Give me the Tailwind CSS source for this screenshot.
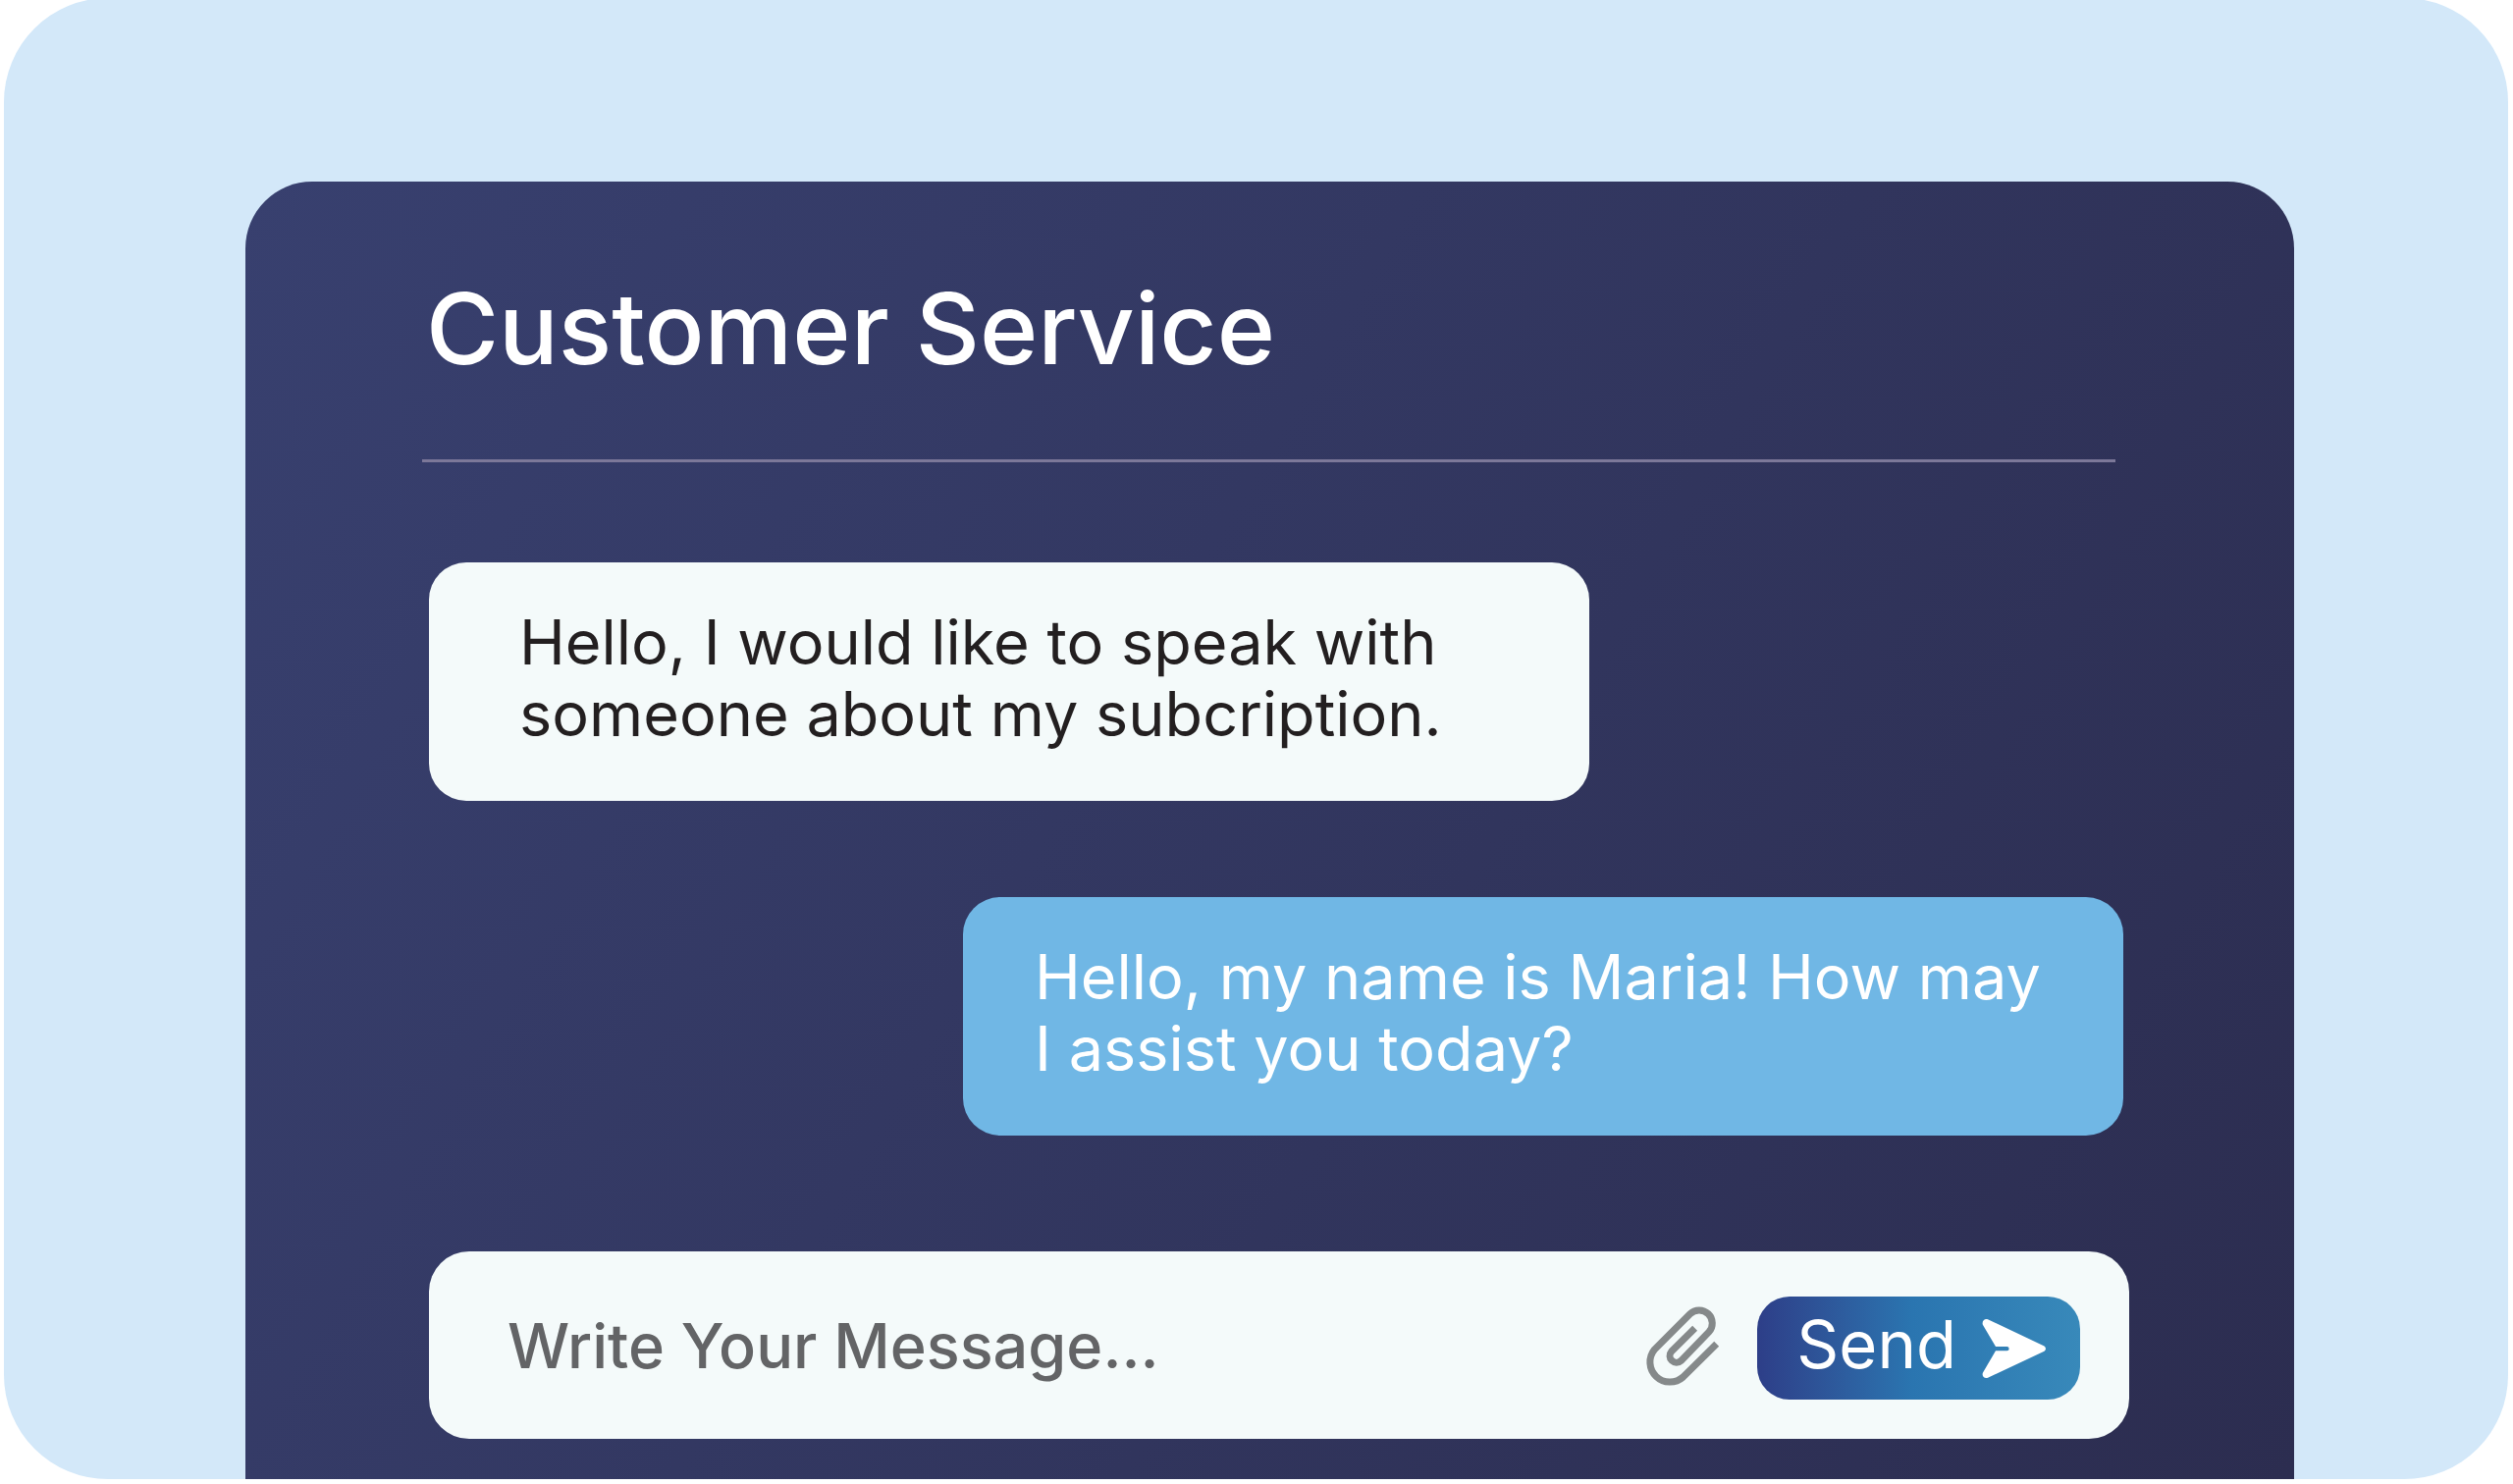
<!DOCTYPE html>
<html lang="en">
  <head>
    <meta charset="UTF-8" />
    <meta name="viewport" content="width=device-width, initial-scale=1.0" />
    <title>Customer Service</title>
    <script src="https://cdn.jsdelivr.net/npm/@tailwindcss/browser@4"></script>
  </head>
  <body class="bg-white font-['Inter',sans-serif]">
    <div class="-mt-0.5 mr-[5px] ml-1 rounded-[106px] bg-[#d3e8f9] pt-[187px] pr-[218px] pl-[246px]">
      <main
        class="rounded-t-[68px] bg-linear-[120deg] from-[#38406f] to-[#2c2d50] pt-[97px] pr-[168px] pb-[41px] pl-[180px]"
      >
        <h1 class="ml-1 text-[101px] leading-[104px] font-medium text-white">
          Customer Service
        </h1>
        <hr class="mt-[82px] mr-[14px] border-t-3 border-[#7c7899]" />

        <!-- Conversation -->
        <section class="mt-[102px] flex flex-col gap-[98px] pr-[6px] pl-[7px] text-[63px] leading-[73px]">
          <p class="w-[1182px] self-start rounded-[38px] bg-[#f4fafa] pt-[45px] pb-[52px] pl-[92px] text-[#231f20]">
            Hello, I would like to speak with<br />someone about my subcription.
          </p>
          <p class="w-[1182px] self-end rounded-[38px] bg-[#70b7e5] pt-[45px] pb-[52px] pl-[73px] text-white">
            Hello, my name is Maria! How may<br />I assist you today?
          </p>
        </section>

        <!-- Message form -->
        <form class="mt-[118px] ml-[7px] flex items-start rounded-[41px] bg-[#f4fafa] pt-[46px] pr-[50px] pb-[40px] pl-[80px]">
          <input
            class="h-[99px] min-w-0 flex-1 bg-transparent text-[63px] font-medium text-[#636466] outline-none placeholder:text-[#636466]"
            type="text"
            name="message"
            aria-label="Write Your Message"
            placeholder="Write Your Message..."
          />
          <button class="mr-[38px] pt-[9px]" type="button" aria-label="Attach a file">
            <svg class="h-[84px] w-[78px]" viewBox="36 60 78 84" fill="none" stroke="#85898a" stroke-width="7">
              <path
                d="M110.7 99.3L76.6 133A20.3 20.3 0 0 1 47.4 105L83.6 68.8A13.3 13.3 0 0 1 102.8 87.2L74.5 116.4A6.8 6.8 0 0 1 64.7 107L88.6 83.3"
              />
            </svg>
          </button>
          <button
            class="flex h-[105px] items-center gap-[26px] rounded-[33px] bg-linear-to-r from-[#2d3e88] via-[#2a75b0] via-48% to-[#3889ba] pr-[34px] pl-[40px] text-[67px] leading-[68px] text-white"
            type="submit"
          >
            <span class="pb-2">Send</span>
            <svg class="h-[62px] w-[66px]" viewBox="0 0 66 62" fill="currentColor">
              <path
                d="M14 29L1 7C-.5 3.5 2.5 0 6 1.3L63.5 28.6Q66.5 31.2 63.5 33.8L6 60.8C2.5 62-.5 59 1 55.5L14 33.3H25.5a2.15 2.15 0 0 0 0-4.3Z"
              />
            </svg>
          </button>
        </form>
      </main>
    </div>
  </body>
</html>
